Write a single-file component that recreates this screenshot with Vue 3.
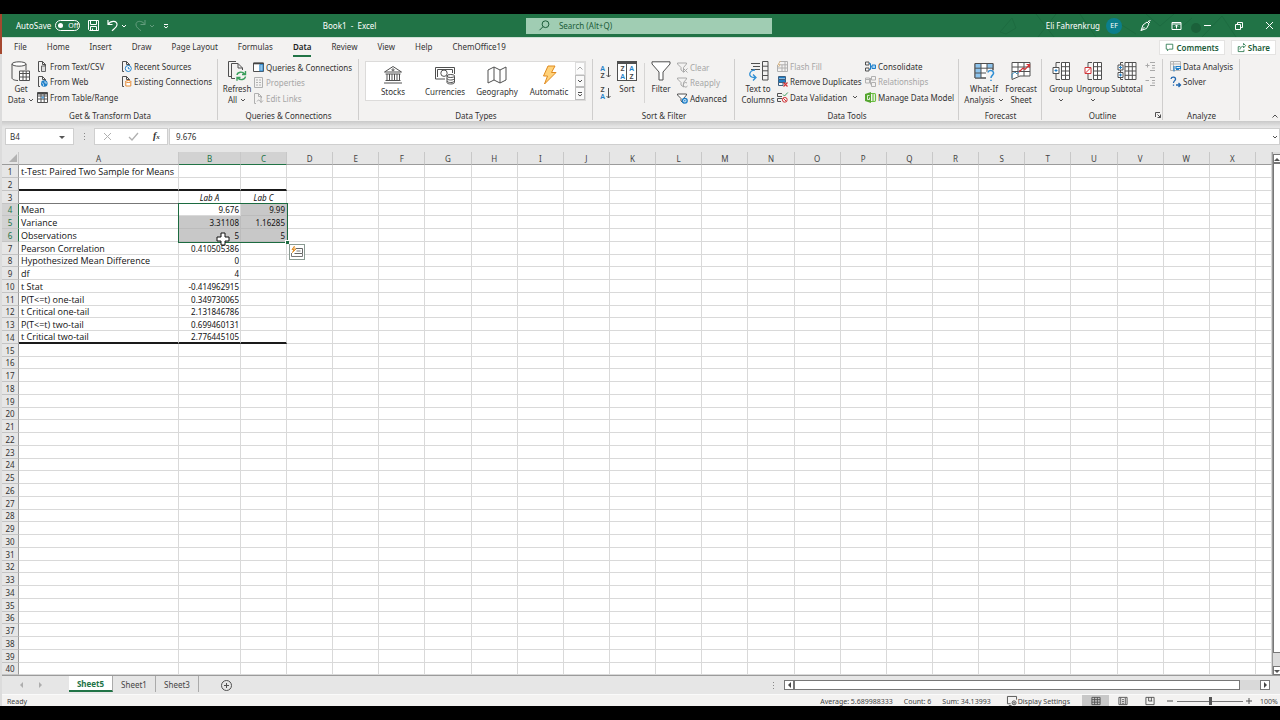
<script setup>
import { ref } from 'vue'

const blue = '#1e7fc8'
const ink = '#505050'
const doc = (c = ink) => `<path d="M8 3.5V10M3 10.5H1.5V.5H5.5L8.5 3.5V5M5.5.5V3.5H8.5" stroke="${c}"/>`
const icons = {
  getData: `<ellipse cx="8" cy="3" rx="7" ry="2.2" fill="#fff"/><path d="M1 3V17C1 18.5 4 19.5 7 19.5M15 3V9"/><path d="M8.5 10H18.5V19.5H8.5Z" fill="#fff"/><path d="M8.5 12.5H18.5M8.5 16H18.5M12 10V19.5M15.2 10V19.5"/>`,
  refresh: `<path d="M5 15.5H1.5V.5H9M8 17.5H4.5V2.5H11L15.5 7V9M11 2.5V7H15.5" fill="none"/><path d="M10 14C10.5 11 15.5 10 17.5 13M18.5 10V13.5H15M18.5 15.5C18 19 13 19.5 11 17M10 19.8V16.5H13.5" stroke="#3a9f5c" stroke-width="1.4"/>`,
  csv: doc() + `<path d="M4.5 5V10.5H8.5V5Z" fill="#ddd" stroke="#666"/>`,
  web: doc() + `<circle cx="7.3" cy="7.5" r="3.3" fill="${blue}" stroke="none"/><path d="M5 6.5Q7 8 6.5 10M8 5V7H10" stroke="#fff" stroke-width=".7"/>`,
  table: `<path d="M.5 .5H10.5V10.5H.5Z" fill="#fff"/><path d="M.5 1.5H10.5" stroke="#444" stroke-width="2"/><path d="M.5 4H10.5M.5 7H10.5M4 1V10.5M7.2 1V10.5"/><path d="M4.5 4.5H7V6.5H4.5Z" fill="#5aa5e0" stroke="none"/>`,
  recent: doc() + `<circle cx="7.3" cy="7.5" r="3" fill="#fff" stroke="${blue}"/><path d="M7.3 6V7.8H8.8" stroke="${blue}"/>`,
  existing: doc() + `<path d="M4.8 5.5V10H9.8V5.5Z" fill="#fff" stroke="#e58a35"/><ellipse cx="7.3" cy="5.5" rx="2.5" ry="1" fill="#fff" stroke="#e58a35"/>`,
  queries: `<path d="M.5 1H10.5V9.5H.5Z" fill="#fff"/><path d="M.5 1.5H10.5" stroke="#444" stroke-width="1.6"/><path d="M6.8 2.5H10V9H6.8Z" fill="#8cc3ec" stroke="${blue}" stroke-width=".8"/>`,
  props: `<path d="M1.5 .5H9.5V10.5H1.5Z" stroke="#b0b0b0"/><path d="M3 3H5M3 5.5H5M3 8H5M6 3H8M6 5.5H8M6 8H8" stroke="#b0b0b0"/>`,
  links: doc('#b0b0b0') + `<path d="M4 8.5Q5.5 5.5 7 8Q8.5 10.5 10 7.5" stroke="#b0b0b0"/>`,
  stocks: `<path d="M1.5 7L10 1.5L18.5 7ZM2.5 9H17.5M4 9V15M6.5 9V15M9 9V15M11.5 9V15M14 9V15M16.5 9V15M2.5 15.5H17.5M1 18H19" fill="none"/><circle cx="10" cy="4.8" r="1"/>`,
  currencies: `<path d="M10 14H.5V2.5H19.5V9M2.5 12V4.5H17.5V8"/><circle cx="9" cy="8.2" r="3.2"/><path d="M12 11V17.5C12 19.5 19.5 19.5 19.5 17.5V11" fill="#fff"/><ellipse cx="15.8" cy="11" rx="3.8" ry="1.5" fill="#fff"/><path d="M12 13.5C12.5 15.5 19 15.5 19.5 13.5M12 16C12.5 18 19 18 19.5 16"/>`,
  geography: `<path d="M1 5L7 2L13 5L19 2V15L13 18L7 15L1 18ZM7 2V15M13 5V18" fill="#fff"/>`,
  automatic: `<path d="M9 1H16L12.5 7.5H17L5.5 19L8.5 11H4.5Z" fill="#ffd27a" stroke="#e08a1e"/>`,
  filter: `<path d="M1 .8H19V3L12 11V19H8V11L1 3Z" fill="#fff"/>`,
  clear: `<path d="M.5 1H9.5V2L6.5 5.5V10L4 8V5.5L.5 2ZM6.5 6.5L10.5 10.5M10.5 6.5L6.5 10.5" stroke="#a9a9a9"/>`,
  reapply: `<path d="M.5 1H9.5V2L6.5 5.5V10L4 8V5.5L.5 2ZM10 6A2.3 2.3 0 1 0 10.5 9" stroke="#a9a9a9"/>`,
  advanced: `<path d="M.5 1H9.5V2L6.5 5.5V10L4 8V5.5L.5 2Z" fill="#fff"/><circle cx="7.8" cy="7.8" r="2.4" fill="#cfe6f7" stroke="${blue}" stroke-width="1.3"/><circle cx="7.8" cy="7.8" r=".8" fill="${blue}" stroke="none"/>`,
  columns: `<path d="M3 2.5H12M5 5.5H12M3 8.5H12M14.5 .5H20V19H14.5ZM14.5 5.2H20M14.5 9.8H20M14.5 14.5H20" /><path d="M7 9C1 9 -1 17 7 16.5M5 13.5L8 16.5L5 19.5" stroke="#2f8fd4" stroke-width="1.3"/>`,
  flash: `<path d="M2.5 .5H10.5V10.5H.5V4M.5 7H10.5M5 4V10.5M8 .5V10.5M3 3.8H10.5" stroke="#b0b0b0"/><path d="M3.5 0L1 3.5H3L1.5 6" stroke="#d8b98c"/>`,
  dup: `<path d="M1.5 .5H8.5V3.5H1.5ZM1.5 3.5H8.5V6.5H1.5ZM1.5 6.5H6V9.5H1.5Z" stroke="#3c5f80"/><path d="M2 4H8V6H2ZM2 1H8V2.5H2Z" fill="${blue}" stroke="none"/><path d="M6.5 6.5L10.5 10.5M10.5 6.5L6.5 10.5" stroke="#d13438" stroke-width="1.2"/>`,
  valid: `<path d="M5 1.5H.5V4.5H5M5 6.5H.5V9.5H4"/><path d="M6 2.5L7.5 4L10.8 .5" stroke="#3a9f5c"/><circle cx="7.8" cy="7.8" r="2.4" stroke="#d13438"/><path d="M6.2 6.2L9.4 9.4" stroke="#d13438"/>`,
  consol: `<path d="M.5 1H4V4H.5ZM.5 7H4V10H.5Z" /><path d="M7 4H10.5V7.5H7Z" fill="#a8d3f3" stroke="${blue}"/><path d="M4 2.5H5.5V8.5H4M5.5 5.7H7" stroke="${blue}"/>`,
  relation: `<path d="M.5 2H4.5V7H.5ZM6.5 .5H10.5V4H6.5ZM6.5 6.5H10.5V10.5H6.5ZM4.5 4.5H5.5M5.5 2V8.5M.5 3.5H4.5" stroke="#b0b0b0"/>`,
  model: `<path d="M0 2L6 0V11L0 9Z" fill="#55a630" stroke="none"/><path d="M6 1.5H9.5Q10.5 1.5 10.5 3V8Q10.5 9.5 9.5 9.5H6M8 2V9" stroke="#6abf40" stroke-width="1.2"/><path d="M4.5 3.5H2.5V7.5H4.5V5.5" stroke="#fff" stroke-width=".8"/>`,
  whatif: `<path d="M1 2.5H19V17H1Z" fill="#fff"/><path d="M1 2.5H7V17H1ZM13 7H19V2.5H13Z" fill="#8cc3ec" stroke="none"/><path d="M1 2.5H19V17H1ZM1 7.2H19M1 12H19M7 2.5V17M13 2.5V17"/><path d="M12 11V20H21V9Z" fill="#f3f2f1" stroke="none"/><path d="M14 11.5C14.5 8.5 20 9 19.5 12.5C19 14.5 17 14.5 17 17M17 18.7V20" stroke="#2f8fd4" stroke-width="1.5"/>`,
  forecast: `<path d="M1 1.5H19V15H9L1 18.5ZM1 6H19M1 10.5H19M7 1.5V15M13 1.5V15" fill="#fff"/><path d="M1 17V13L4 11L6 13L9 9" stroke="#4a8fb8"/><path d="M8 11L12 7L14 8.5L18.5 3.5M15.5 3.5H18.5V6.5" stroke="#d13438" stroke-width="1.2"/>`,
  group: `<path d="M10.5 1.5H18.5V18.5H10.5ZM10.5 5.7H18.5M10.5 10H18.5M10.5 14.3H18.5M14.5 1.5V18.5" fill="#fff"/><path d="M9 1.5H5V6M9 18.5H5V13"/><path d="M2 6.5H8V12.5H2Z" fill="#fff"/><path d="M3.5 9.5H6.5M5 8V11" stroke="${blue}"/>`,
  ungroup: `<path d="M10.5 1.5H18.5V18.5H10.5ZM10.5 5.7H18.5M10.5 10H18.5M10.5 14.3H18.5M14.5 1.5V18.5" fill="#fff"/><path d="M9 1.5H5V6M9 18.5H5V13"/><path d="M2 6.5H8V12.5H2Z" fill="#fff" stroke="#d13438"/><path d="M2.5 12L7.5 7" stroke="#d13438"/>`,
  subtotal: `<path d="M8 1.5H19V18.5H8ZM8 5.7H19M8 10H19M8 14.3H19M11.7 1.5V18.5M15.3 1.5V18.5" fill="#fff"/><path d="M6 1.5H3.5V18.5H6"/><path d="M1 4H6V9H1ZM1 11.5H6V16.5H1Z" fill="#fff"/><path d="M2 6.5H5M3.5 5V8M2 14H5M3.5 12.5V15.5" stroke="${blue}"/>`,
  show: `<path d="M5 1.5H10M7 4.5H10M7 7H10M5 9.5H10M.5 4.5H4.5M2.5 2.5V6.5" stroke="#a9a9a9"/>`,
  hide: `<path d="M5 1.5H10M7 4.5H10M7 7H10M5 9.5H10M.5 4.5H4" stroke="#a9a9a9"/>`,
  analysis: `<path d="M.5 .5H10.5V9.5H.5ZM.5 3H10.5M3.5 .5V9.5" stroke="#b5b5b5"/><path d="M4 5V10.5M6 5.5H10.5V7.5H6ZM6 8.5H9" stroke="${blue}" stroke-width="1.1"/>`,
  solver: `<path d="M1 3C1.5 .2 6 .5 5.5 3.5C5 5 3.5 5 3.5 7M3.5 8.5V9.8M6 9H10.5M8.5 7L10.5 9L8.5 11" stroke="#2167b0" stroke-width="1.3"/>`,
  save: `<path d="M.5 .5H10.5V10.5H1.5L.5 9.5ZM2.5 .5V4.5H8.5V.5M2.5 10.5V6.5H8.5V10.5M4.5 10V8.5"/>`,
  undo: `<path d="M1 0V4.5H5.5M1 4.5C4 0 10.5 .5 10 5C9.8 7.5 7 9 5 10.8" stroke-width="1.2"/>`,
  redo: `<path d="M10 0V4.5H5.5M10 4.5C7 0 .5 .5 1 5C1.2 7.5 4 9 6 10.8"/>`,
  search: `<circle cx="6.5" cy="4.2" r="3.4"/><path d="M4 6.7L.5 10.2"/>`,
  pen: `<path d="M1 10.5L3 5L7 2L9 4L6.5 8.5ZM1 10.5L4.5 7M8 1L10 3M8 1.5L10.5 .5"/>`,
  display: `<path d="M1 2.5H10V9.5H1ZM1 4H10M5.5 8.5V5M4 6.5L5.5 5L7 6.5"/>`,
  min: `<path d="M2 5.5H9"/>`,
  restore: `<path d="M2.5 4.5H7.5V9.5H2.5ZM4.5 4V2.5H9.5V7.5H8"/>`,
  close: `<path d="M2 2L9 9M9 2L2 9"/>`,
  comment: `<path d="M1.5 1.5H9.5V7.5H5L3 9.5V7.5H1.5Z"/>`,
  share: `<path d="M4 4.5H1.5V10.5H8.5V8M3.5 8C4 5 6 4 8 4V6L10.5 3.2L8 .5V2.5"/>`,
  caret: `<path d="M1 1L3 3L5 1"/>`,
  caretUp: `<path d="M.5 3.5L3 1L5.5 3.5"/>`,
  more: `<path d="M1 .5H5M1 2.2L3 4L5 2.2"/>`,
  tri: `<path d="M0 1H6L3 4Z" fill="#555" stroke="none"/>`,
  triUp: `<path d="M0 4H6L3 1Z" fill="#555" stroke="none"/>`,
  triL: `<path d="M4 0V6L1 3Z" fill="#444" stroke="none"/>`,
  triR: `<path d="M1 0V6L4 3Z" fill="#444" stroke="none"/>`,
  x: `<path d="M2 2L9 9M9 2L2 9" stroke="#b0b0b0"/>`,
  check: `<path d="M1 6L4 9L10 2" stroke="#b0b0b0" stroke-width="1.3"/>`,
  launch: `<path d="M.5 5V.5H5M2.5 2.5L5.5 5.5M5.5 2.5V5.5H2.5"/>`,
  plus: `<circle cx="5.5" cy="5.5" r="5"/><path d="M5.5 3V8M3 5.5H8"/>`,
  quick: `<path d="M4.5 2.5H11.5V7.5H3.5" stroke="#666"/><path d="M.5 7V10.5H11.5V8M5.5 5H9.5" stroke="#777"/><path d="M3.5 0L1 3.5H3L1.5 6.5L5 3" fill="#f5c07a" stroke="#e0912f"/>`,
  screen: `<path d="M4 8.5H.5V.5H10.5V4M2 10.5H5"/><circle cx="7.8" cy="7.5" r="2.2"/><circle cx="7.8" cy="7.5" r=".6"/>`,
  normal: `<path d="M1 1.5H10V9.5H1ZM1 4H10M1 6.8H10M4 1.5V9.5M7 1.5V9.5"/>`,
  layout: `<path d="M1 1.5H10V9.5H1ZM3 2V9M8 2V9M4.5 4H6.5M4.5 6H6.5M4.5 8H6.5"/>`,
  breaks: `<path d="M1 1.5H10V9.5H1ZM4 1.5V5.5H8M7 1.5V5.5"/>`
}

const tabs = ['File', 'Home', 'Insert', 'Draw', 'Page Layout', 'Formulas', 'Data', 'Review', 'View', 'Help', 'ChemOffice19']
const big = (icon, l1, l2, w, caret) => ({ kind: 'big', icon, lines: l2 === undefined ? [l1] : [l1, l2], w, caret })
const list = (w, ...items) => ({ kind: 'list', w, items: items.map(([icon, label, off, caret]) => ({ icon, label, off, caret })) })
const groups = [
  { name: 'Get & Transform Data', cls: 'g-get', parts: [
    big('getData', 'Get', 'Data', 'w32', true),
    list('w84', ['csv', 'From Text/CSV'], ['web', 'From Web'], ['table', 'From Table/Range']),
    list('', ['recent', 'Recent Sources'], ['existing', 'Existing Connections'])] },
  { name: 'Queries & Connections', cls: 'g-query', parts: [
    big('refresh', 'Refresh', 'All', 'w32', true),
    list('', ['queries', 'Queries & Connections'], ['props', 'Properties', true], ['links', 'Edit Links', true])] },
  { name: 'Data Types', cls: 'g-types', parts: [{ kind: 'gallery' }] },
  { name: 'Sort & Filter', cls: 'g-sort', parts: [
    { kind: 'sort' },
    big('filter', 'Filter', undefined, 'w32'),
    list('', ['clear', 'Clear', true], ['reapply', 'Reapply', true], ['advanced', 'Advanced'])] },
  { name: 'Data Tools', cls: 'g-tools', parts: [
    big('columns', 'Text to', 'Columns', 'w38'),
    list('w88', ['flash', 'Flash Fill', true], ['dup', 'Remove Duplicates'], ['valid', 'Data Validation', false, true]),
    list('', ['consol', 'Consolidate'], ['relation', 'Relationships', true], ['model', 'Manage Data Model'])] },
  { name: 'Forecast', cls: 'g-fore', parts: [
    big('whatif', 'What-If', 'Analysis', 'w42', true),
    big('forecast', 'Forecast', 'Sheet', 'w32')] },
  { name: 'Outline', cls: 'g-outline', launch: true, parts: [
    big('group', 'Group', '', 'w28', true),
    big('ungroup', 'Ungroup', '', 'w36', true),
    big('subtotal', 'Subtotal', undefined, 'w32'),
    list('', ['show', ''], ['hide', ''])] },
  { name: 'Analyze', cls: 'g-analyze', parts: [
    list('', ['analysis', 'Data Analysis'], ['solver', 'Solver'])] }
]
const types = [['stocks', 'Stocks'], ['currencies', 'Currencies'], ['geography', 'Geography'], ['automatic', 'Automatic']]

const letters = 'ABCDEFGHIJKLMNOPQRSTUVWX'.split('')
const data = {
  1: ['t-Test: Paired Two Sample for Means'], 3: ['', 'Lab A', 'Lab C'],
  4: ['Mean', '9.676', '9.99'], 5: ['Variance', '3.31108', '1.16285'], 6: ['Observations', '5', '5'],
  7: ['Pearson Correlation', '0.410505386'], 8: ['Hypothesized Mean Difference', '0'], 9: ['df', '4'],
  10: ['t Stat', '-0.414962915'], 11: ['P(T<=t) one-tail', '0.349730065'], 12: ['t Critical one-tail', '2.131846786'],
  13: ['P(T<=t) two-tail', '0.699460131'], 14: ['t Critical two-tail', '2.776445105']
}
const cellClass = (r, c) => ({
  label: c === 0,
  num: c > 0 && c < 3,
  sel: r >= 4 && r <= 6 && (c === 1 || c === 2) && !(r === 4 && c === 1),
  head: r === 3 && c < 3,
  thick: (r === 2 || r === 14) && c < 3,
  thin: r === 3 && c === 0
})
const nameBox = ref('B4')
const formula = ref('9.676')
const query = ref('')
const zoom = ref(100)
</script>

<template>
  <div class="screen">
    <div class="edge"></div>
    <main class="app">
      <header class="titlebar">
        <div class="quick">
          <span id="auto">AutoSave</span>
          <button class="toggle" aria-labelledby="auto"><i></i>Off</button>
          <button aria-label="Save"><svg class="s" viewBox="0 0 11 11" v-html="icons.save"></svg></button>
          <button class="pair" aria-label="Undo"><svg class="s" viewBox="0 0 11 11" v-html="icons.undo"></svg><svg class="c" viewBox="0 0 6 4" v-html="icons.caret"></svg></button>
          <button class="pair dim" aria-label="Redo"><svg class="s" viewBox="0 0 11 11" v-html="icons.redo"></svg><svg class="c" viewBox="0 0 6 4" v-html="icons.caret"></svg></button>
          <button aria-label="Customize toolbar"><svg class="c" viewBox="0 0 6 4" v-html="icons.more"></svg></button>
          <span class="title">Book1&nbsp; -&nbsp; Excel</span>
        </div>
        <label class="search">
          <svg class="s" viewBox="0 0 11 11" v-html="icons.search"></svg>
          <input v-model="query" placeholder="Search (Alt+Q)" aria-label="Search">
        </label>
        <div class="account">
          <svg class="pattern" viewBox="0 0 270 23" aria-hidden="true">
            <path d="M4 18L16 4L20 14L10 20ZM40 0L58 23M60 0L42 23M84 0L100 23M118 6L140 20M150 0L164 12L178 0M206 23L226 2L240 23M182 16L196 4" />
            <circle cx="200" cy="14" r="5" />
          </svg>
          <span>Eli Fahrenkrug</span>
          <span class="avatar">EF</span>
          <button v-for="b in ['pen', 'display', 'min', 'restore', 'close']" :key="b" class="win" :aria-label="b">
            <svg class="s" viewBox="0 0 11 11" v-html="icons[b]"></svg>
          </button>
        </div>
      </header>

      <nav class="tabs">
        <button v-for="t in tabs" :key="t" :class="{ on: t === 'Data' }">{{ t }}</button>
        <div class="collab">
          <button><svg class="s" viewBox="0 0 11 11" v-html="icons.comment"></svg>Comments</button>
          <button><svg class="s" viewBox="0 0 11 11" v-html="icons.share"></svg>Share</button>
        </div>
      </nav>

      <section class="ribbon">
        <div v-for="g in groups" :key="g.name" class="group" :class="g.cls">
          <div class="parts">
            <template v-for="(p, i) in g.parts" :key="i">
              <button v-if="p.kind === 'big'" class="big" :class="p.w">
                <svg class="l" viewBox="0 0 20 20" v-html="icons[p.icon]"></svg>
                <span v-for="(l, n) in p.lines" :key="n">{{ l }}<svg v-if="p.caret && n === 1" class="c" viewBox="0 0 6 4" v-html="icons.caret"></svg></span>
              </button>
              <div v-else-if="p.kind === 'list'" class="list" :class="p.w">
                <button v-for="it in p.items" :key="it.icon" :class="{ off: it.off }" :aria-label="it.label || it.icon">
                  <svg class="s" viewBox="0 0 11 11" v-html="icons[it.icon]"></svg>{{ it.label }}<svg v-if="it.caret" class="c far" viewBox="0 0 6 4" v-html="icons.caret"></svg>
                </button>
              </div>
              <div v-else-if="p.kind === 'gallery'" class="gallery">
                <button v-for="t in types" :key="t[0]" class="type">
                  <svg class="l" viewBox="0 0 20 20" v-html="icons[t[0]]"></svg>{{ t[1] }}
                </button>
                <div class="steps">
                  <button v-for="s in ['caretUp', 'caret', 'more']" :key="s" :aria-label="s"><svg class="c" viewBox="0 0 6 4" v-html="icons[s]"></svg></button>
                </div>
              </div>
              <template v-else>
                <div class="orders">
                  <button aria-label="Sort A to Z"><span><b>A</b><em>Z</em></span><svg viewBox="0 0 5 11"><path d="M2.5 0V10M.5 8L2.5 10L4.5 8" /></svg></button>
                  <button aria-label="Sort Z to A"><span><em>Z</em><b>A</b></span><svg viewBox="0 0 5 11"><path d="M2.5 0V10M.5 8L2.5 10L4.5 8" /></svg></button>
                </div>
                <button class="big w24">
                  <span class="tiles"><em>Z</em><b>A</b><b>A</b><em>Z</em></span>
                  <span>Sort</span>
                </button>
                <hr>
              </template>
            </template>
          </div>
          <div class="caption">{{ g.name }}<button v-if="g.launch" class="launch" aria-label="Outline settings"><svg viewBox="0 0 6 6" v-html="icons.launch"></svg></button></div>
        </div>
        <button class="collapse" aria-label="Collapse ribbon"><svg class="c" viewBox="0 0 6 4" v-html="icons.caretUp"></svg></button>
      </section>

      <section class="formula">
        <label class="namebox"><input v-model="nameBox" aria-label="Name box"><svg class="c" viewBox="0 0 6 4" v-html="icons.tri"></svg></label>
        <span class="dots"><i></i><i></i><i></i></span>
        <div class="fx">
          <button aria-label="Cancel"><svg class="s" viewBox="0 0 11 11" v-html="icons.x"></svg></button>
          <button aria-label="Enter"><svg class="s" viewBox="0 0 11 11" v-html="icons.check"></svg></button>
          <button aria-label="Insert function" class="fn">f<sub>x</sub></button>
        </div>
        <label class="value"><input v-model="formula" aria-label="Formula"><svg class="c" viewBox="0 0 6 4" v-html="icons.caret"></svg></label>
      </section>

      <section class="sheet">
        <div class="grid">
          <table>
            <colgroup><col class="c-num"><col class="c-a"><col class="c-b"><col class="c-c"><col v-for="n in 21" :key="n"><col class="c-last"></colgroup>
            <thead>
              <tr>
                <th class="corner"><svg viewBox="0 0 8 8"><path d="M8 0V8H0Z" /></svg></th>
                <th v-for="(l, i) in letters" :key="l" scope="col" :class="{ act: i === 1 || i === 2 }">{{ l }}</th>
                <th></th>
              </tr>
            </thead>
            <tbody>
              <tr v-for="r in 40" :key="r">
                <th scope="row" :class="{ act: r >= 4 && r <= 6 }">{{ r }}</th>
                <td v-for="(l, c) in letters" :key="l" :class="cellClass(r, c)">{{ data[r] ? data[r][c] : '' }}</td>
                <td></td>
              </tr>
            </tbody>
          </table>
          <div class="selection"><i></i></div>
          <button class="analysis" aria-label="Quick analysis"><svg viewBox="0 0 12 12" v-html="icons.quick"></svg></button>
          <svg class="pointer" viewBox="0 0 14 14"><path d="M5 1H9V5H13V9H9V13H5V9H1V5H5Z" /></svg>
        </div>
        <div class="vbar">
          <button aria-label="Scroll up"><svg class="c" viewBox="0 0 6 4" v-html="icons.triUp"></svg></button>
          <div class="thumb"></div>
          <button aria-label="Scroll down"><svg class="c" viewBox="0 0 6 4" v-html="icons.tri"></svg></button>
        </div>
      </section>

      <nav class="sheets">
        <div class="steppers">
          <button aria-label="Previous sheet"><svg viewBox="0 0 5 6" v-html="icons.triL"></svg></button>
          <button aria-label="Next sheet"><svg viewBox="0 0 5 6" v-html="icons.triR"></svg></button>
        </div>
        <button class="tab on">Sheet5</button>
        <button class="tab">Sheet1</button>
        <button class="tab">Sheet3</button>
        <button class="add" aria-label="New sheet"><svg class="s" viewBox="0 0 11 11" v-html="icons.plus"></svg></button>
        <span class="dots"><i></i><i></i><i></i></span>
        <div class="hbar">
          <button aria-label="Scroll left"><svg viewBox="0 0 5 6" v-html="icons.triL"></svg></button>
          <div class="thumb"></div>
          <button aria-label="Scroll right"><svg viewBox="0 0 5 6" v-html="icons.triR"></svg></button>
        </div>
      </nav>

      <footer class="status">
        <span>Ready</span>
        <span class="avg">Average: 5.689988333</span>
        <span>Count: 6</span>
        <span>Sum: 34.13993</span>
        <button class="disp"><svg class="s" viewBox="0 0 11 11" v-html="icons.screen"></svg>Display Settings</button>
        <div class="views">
          <button v-for="v in ['normal', 'layout', 'breaks']" :key="v" :class="{ on: v === 'normal' }" :aria-label="v"><svg class="s" viewBox="0 0 11 11" v-html="icons[v]"></svg></button>
        </div>
        <button class="sign" aria-label="Zoom out"><svg viewBox="0 0 6 6"><path d="M0 3H6" /></svg></button>
        <input v-model="zoom" type="range" min="0" max="200" aria-label="Zoom">
        <button class="sign" aria-label="Zoom in"><svg viewBox="0 0 6 6"><path d="M0 3H6M3 0V6" /></svg></button>
        <span class="pct">{{ zoom }}%</span>
      </footer>
    </main>
  </div>
</template>

<style>
body { margin: 0; background: #000; overflow: hidden; }
</style>

<style scoped>
.screen { display: flex; min-height: 100vh; box-sizing: border-box; padding: 14px 0; background: #000; font: 8px/11px "Noto Sans", "Open Sans", sans-serif; color: #333; }
.edge { flex: none; width: 2px; background: linear-gradient(#a5482f 40px, #dcdcdc 40px); }
.app { flex: 1; min-width: 0; display: flex; flex-direction: column; background: #e6e6e6; }
.app * { box-sizing: border-box; }
button, input { font: inherit; color: inherit; border: 0; background: none; padding: 0; margin: 0; }
button { white-space: nowrap; }
svg { fill: none; stroke: #505050; display: block; flex: none; overflow: visible; }
.s { width: 11px; height: 11px; }
.l { width: 20px; height: 20px; }
.c { width: 6px; height: 4px; }

.titlebar { height: 23px; display: grid; grid-template-columns: 41% 246px 1fr; align-items: center; background: #217346; color: #fff; }
.titlebar svg { stroke: #fff; }
.quick { display: flex; align-items: center; padding-left: 14px; gap: 8px; }
.toggle { display: flex; align-items: center; gap: 5px; width: 25px; height: 11px; margin-left: -4px; padding-left: 2px; border: 1px solid #fff; border-radius: 6px; font-size: 7px; line-height: 9px; }
.toggle i { width: 5px; height: 5px; border-radius: 50%; background: #fff; }
.pair { display: flex; align-items: center; gap: 3px; }
.dim { opacity: .3; }
.title { margin: 0 auto; padding-right: 4px; }
.search { display: flex; align-items: center; gap: 8px; height: 16px; padding-left: 13px; background: #a0cdb3; color: #1c5c39; }
.search svg { stroke: #1c5c39; }
.search input { flex: 1; min-width: 0; outline: 0; padding-left: 1px; }
.search input::placeholder { color: #1c5c39; opacity: 1; }
.account { position: relative; align-self: stretch; display: flex; align-items: center; justify-content: flex-end; }
.account span { position: relative; }
.account .avatar { width: 16px; height: 16px; margin: 0 8px 0 6px; border-radius: 50%; background: #0b7f8c; font-size: 7px; line-height: 16px; text-align: center; }
.pattern { position: absolute; right: 14px; top: 0; width: 270px; height: 23px; overflow: hidden; }
.titlebar .pattern path { stroke: #1d6b40; }
.titlebar .pattern circle { fill: #1b613a; stroke: none; }
.win { position: relative; width: 31px; display: flex; justify-content: center; }
.win:last-child { width: 26px; padding-left: 4px; }

.tabs { height: 21px; display: flex; align-items: center; gap: 20px; padding-left: 12px; background: #f3f2f1; border-top: 1px solid #cfe0d6; }
.tabs > button { height: 17px; padding-bottom: 1px; border-bottom: 2px solid transparent; }
.tabs .on { font-weight: 600; color: #222; border-color: #217346; }
.collab { margin-left: auto; display: flex; gap: 6px; padding: 0 4px 2px 0; }
.collab button { display: flex; align-items: center; gap: 2px; height: 15px; padding: 0 5px; background: #fff; border: 1px solid #e4e3e2; color: #1c5c39; font-weight: 600; }
.collab svg { width: 9px; height: 9px; stroke: #217346; }

.ribbon { height: 63px; display: flex; background: #f3f2f1; }
.group { display: flex; flex-direction: column; flex: none; position: relative; }
.group::after { content: ""; position: absolute; right: 0; top: 1px; bottom: 1px; width: 1px; background: #cfcecd; }
.g-get { width: 216px; } .g-query { width: 141px; } .g-types { width: 234px; } .g-sort { width: 142px; }
.g-tools { width: 224px; } .g-fore { width: 83px; } .g-outline { width: 121px; } .g-analyze { width: 77px; }
.parts { flex: 1; display: flex; align-items: flex-start; padding: 0 0 0 3px; }
.caption { display: flex; justify-content: center; height: 11px; }
.launch { position: absolute; right: 2px; bottom: 3px; }
.launch svg { width: 6px; height: 6px; }
.big { display: flex; flex-direction: column; align-items: center; padding-top: 3px; }
.big .l { margin-bottom: 2px; }
.big > span { display: flex; align-items: center; gap: 3px; min-height: 11px; }
.w24 { width: 24px; } .w28 { width: 28px; } .w32 { width: 32px; } .w36 { width: 36px; } .w38 { width: 38px; } .w42 { width: 42px; } .w84 { width: 84px; } .w88 { width: 88px; }
.list { display: grid; grid-template-rows: 16px 15px 16px; }
.list button { display: flex; align-items: center; gap: 2px; text-align: left; }
.off { color: #a6a6a6; }
.far { margin-left: 3px; }
.g-query .list, .g-sort .list { padding-top: 1px; }
.g-tools .parts, .g-fore .parts { padding-left: 4px; }
.g-analyze .parts { padding-left: 7px; }
.g-outline .parts { padding-left: 5px; }
.g-outline .list { padding-left: 2px; }
.gallery { display: flex; margin: 3px 0 0 4px; width: 221px; height: 40px; padding-left: 1px; background: #fff; border: 1px solid #dcdbda; }
.g-types .parts { padding-left: 2px; }
.type { width: 52px; display: flex; flex-direction: column; align-items: center; padding-top: 3px; gap: 1px; }
.steps { margin-left: auto; width: 10px; display: grid; grid-template-rows: 1fr 1fr 1fr; }
.steps button { display: grid; place-items: center; border: 1px solid #bdbdbd; background: #fafafa; }
.steps button:first-child { opacity: .5; }
.orders { width: 19px; padding-top: 5px; display: grid; gap: 3px; }
.orders button { display: flex; align-items: center; justify-content: center; gap: 1px; height: 18px; }
.orders span { display: grid; line-height: 7px; font-size: 7px; }
.orders svg { width: 5px; height: 11px; }
b { font-weight: 600; color: #1e7fc8; }
em { font-style: normal; font-weight: 600; color: #444; }
.big .tiles { display: grid; grid-template-columns: 9px 9px; gap: 0; width: 20px; height: 20px; margin-bottom: 2px; padding-top: 1px; border: 1px solid #505050; border-top-width: 3px; background: linear-gradient(90deg, #fff 8px, #505050 8px, #505050 9px, #fff 9px); font-size: 7px; line-height: 8px; text-align: center; }
hr { width: 1px; height: 40px; margin: 5px 0 0 5px; border: 0; background: #d6d5d4; }
.collapse { margin: auto 2px 3px auto; }

.formula { height: 31px; display: flex; align-items: center; padding: 0 0 0 3px; background: linear-gradient(#c9c9c9, #e6e6e6 6px); }
.formula label, .fx { display: flex; align-items: center; height: 17px; background: #fff; border: 1px solid #cfcfcf; }
.namebox { width: 69px; padding: 0 8px 0 4px; }
.namebox input, .value input { flex: 1; min-width: 0; outline: 0; }
.dots { display: grid; gap: 2px; width: 20px; justify-items: center; }
.dots i { width: 1px; height: 1px; background: #888; }
.fx { width: 74px; justify-content: space-around; }
.fn { font: italic 600 10px/12px "Liberation Serif", serif; }
.fn sub { font-size: 7px; vertical-align: baseline; }
.value { flex: 1; margin-left: 1px; padding: 0 1px 0 6px; }

.sheet { display: flex; }
.grid { position: relative; flex: 1; min-width: 0; border-right: 1px solid #9b9b9b; background: #fff; }
table { width: 100%; table-layout: fixed; border-collapse: separate; border-spacing: 0; }
.c-num { width: 17px; } .c-a { width: 160px; } .c-b { width: 62px; } .c-c { width: 46px; } .c-last { width: 16px; }
th, td { height: 13px; padding: 0 1px; overflow: hidden; white-space: nowrap; line-height: 11px; font-weight: 400; }
tbody tr:nth-child(4n) > * { height: 12px; }
th { background: #e6e6e6; color: #444; border-right: 1px solid #c8c8c8; border-bottom: 1px solid #c4c4c4; text-align: center; padding: 0; }
thead th { border-bottom-color: #9b9b9b; }
tbody th { border-right-color: #9b9b9b; color: #333; }
th.act { background: #d2d2d2; color: #217346; }
thead th.act { border-bottom-color: #217346; }
tbody th.act { border-right-color: #217346; }
.corner svg { width: 8px; height: 8px; margin: 0 1px 0 auto; stroke: none; fill: #b2b2b2; }
td { color: #111; border-right: 1px solid #d9d9d9; border-bottom: 1px solid #d9d9d9; }
.label { padding-left: 2px; font-family: "Open Sans", "Noto Sans", sans-serif; font-size: 9px; }
.num { text-align: right; }
.head { text-align: center; font-style: italic; }
.sel { background: #c8c8c8; border-color: #bcbcbc; }
.thick { border-bottom: 2px solid #1a1a1a; line-height: 10px; }
.thin { border-bottom-color: #777; }
.selection { position: absolute; left: 176px; top: 51px; width: 110px; height: 40px; border: 1px solid #1c6b40; }
.selection i { position: absolute; right: -2px; bottom: -2px; width: 3px; height: 3px; background: #1c6b40; border: 1px solid #fff; box-sizing: content-box; border-right: 0; border-bottom: 0; }
.analysis { position: absolute; left: 287px; top: 92px; width: 16px; height: 16px; padding: 1px; background: #fff; border: 1px solid #8a9a92; }
.analysis svg { width: 12px; height: 12px; }
.pointer { position: absolute; left: 214px; top: 80px; width: 14px; height: 14px; fill: #fff; stroke: #111; }
.vbar { width: 7px; display: flex; flex-direction: column; background: #dcdcdc; overflow: hidden; }
.vbar button { height: 9px; flex: none; background: #fff; border: 1px solid #777; border-right: 0; display: grid; place-items: center; }
.vbar button:first-child { margin-top: 2px; }
.vbar .thumb { flex: 1; margin-bottom: 13px; background: #fff; border: 1px solid #777; border-right: 0; }

.sheets { height: 19px; display: flex; border-top: 1px solid #9b9b9b; color: #444; }
.steppers { width: 67px; display: flex; align-items: center; gap: 14px; padding-left: 17px; opacity: .35; }
.steppers svg, .hbar svg { width: 5px; height: 6px; }
.tab { height: 16px; width: 43px; border-right: 1px solid #aaa; }
.tab.on { width: 44px; font-weight: 700; color: #217346; background: #fff; border-bottom: 2px solid #217346; }
.add { margin-left: 22px; }
.sheets .dots { margin-left: auto; align-content: center; width: 22px; }
.hbar { width: 38%; display: flex; align-items: center; margin-right: 10px; }
.hbar button { width: 10px; height: 10px; background: #fff; border: 1px solid #777; display: grid; place-items: center; }
.hbar .thumb { flex: 1; height: 10px; margin-right: 20px; background: #fff; border: 1px solid #777; box-shadow: 20px 0 #d9d9d9; }
.hbar button:last-child { position: relative; }

.status { height: 12px; display: flex; align-items: center; padding: 1px 0 0 5px; background: #f3f2f1; border-top: 1px solid #fafafa; font-size: 7px; color: #444; overflow: hidden; white-space: nowrap; }
.status .s { width: 10px; height: 10px; }
.avg { margin-left: auto; }
.avg, .avg + span { margin-right: 11px; }
.disp { display: flex; align-items: center; gap: 1px; margin-left: 16px; }
.views { display: flex; margin: 0 4px 0 12px; }
.views button { width: 27px; height: 12px; display: grid; place-items: center; }
.views .on { background: #c8c8c8; }
.sign svg { width: 6px; height: 6px; }
input[type=range] { appearance: none; width: 66px; height: 11px; margin: 0 3px 0 4px; background: linear-gradient(#777, #777) center / 100% 1px no-repeat; }
input[type=range]::-webkit-slider-thumb { appearance: none; width: 3px; height: 8px; background: #555; }
.pct { width: 20px; margin-left: 8px; }
</style>
